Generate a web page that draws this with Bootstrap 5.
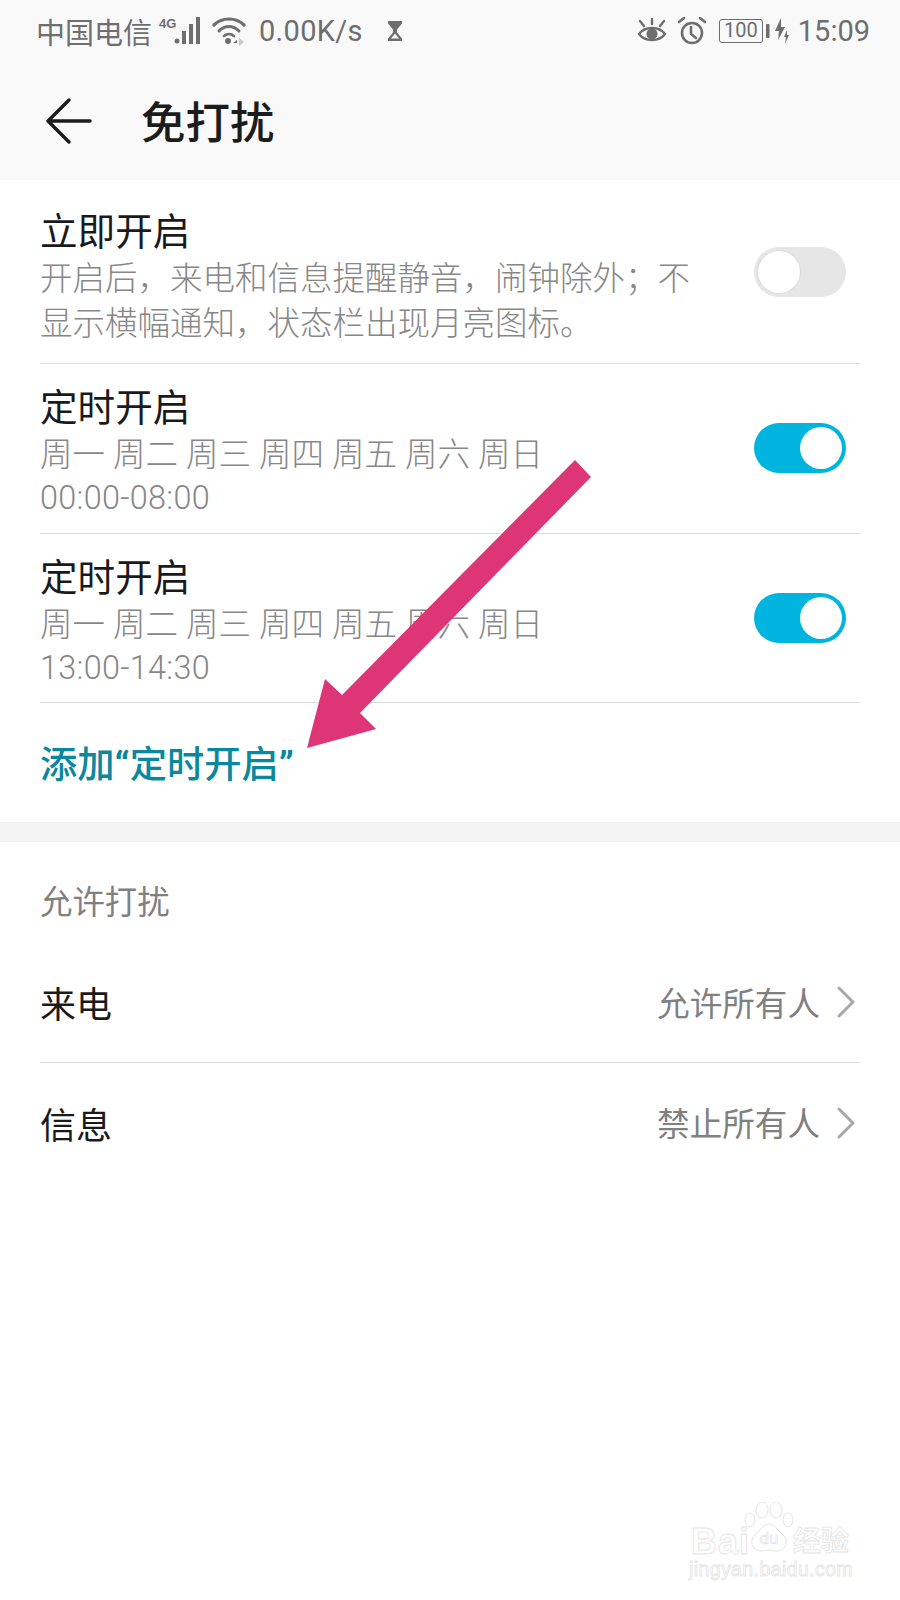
<!DOCTYPE html>
<html lang="zh"><head><meta charset="utf-8">
<link href="https://cdn.jsdelivr.net/npm/bootstrap@5.3.0/dist/css/bootstrap.min.css" rel="stylesheet">
<style>
html,body{margin:0;background:#fff}
body{width:900px;height:1600px;position:relative;overflow:hidden;font-family:"Noto Sans CJK SC","Noto Sans",sans-serif;color:#1a1a1a}
.top-zone{background:#f9f9f9;height:180px}
.stat-bar{height:62px;padding:0 30px 0 36px;color:#6e6e6e}
.carrier{font-size:29px;line-height:1}
.speed,.clock{font-family:Roboto,sans-serif;line-height:1}
.speed{font-size:29px;letter-spacing:.3px;margin-left:13px}
.clock{font-size:29px;margin-left:8px}
.sig-ico{margin-left:2px}
.wifi-ico{margin-left:8px}
.glass-ico{margin-left:24px}
.alarm-ico{margin-left:11px}
.batt{display:block;width:44px;height:24px;margin-left:13px;border:1.5px solid #6e6e6e;border-radius:3px;font-family:Roboto,sans-serif;font-size:20px;line-height:21px;text-align:center;color:#6e6e6e}
.bolt-ico{margin-left:3px}
.nav-zone{height:118px;padding-left:46px}
.nav-title{font-size:44.5px;font-weight:500;margin-left:49px;line-height:1;padding-bottom:2px;color:#1c1c1c}
.setting{margin:0 40px;border-bottom:1px solid #dcdcdc}
.r-first{height:184px;padding-top:26px}
.r-time{height:169.5px;padding-top:18px}
.r-end{border-bottom:0;height:119px;font-size:37.3px;font-weight:500;color:#0b879e;line-height:1;padding-top:3px}
.qt{font-family:Roboto,sans-serif;font-weight:700}
.set-title{font-size:37.6px;line-height:45px;margin-bottom:2px}
.set-sub{font-size:32.5px;line-height:45px;color:#878787;font-weight:300;word-spacing:.8px}
.set-time{font-family:Roboto,sans-serif;font-size:32.4px;letter-spacing:.3px;margin-top:2px}
.copy-col{width:670px}
.sw{width:92px;height:50px;border-radius:25px;margin-right:14px;flex:none;padding:4px}
.sw-off{background:#e6e6e6;margin-top:41px}
.sw-on{background:#00b4e0;margin-top:41px}
.sw i{display:block;width:42px;height:42px;border-radius:50%;background:#fff}
.sw-off i{box-shadow:0 0 0 1px #dcdcdc}
.sw-on i{margin-left:auto}
.band{height:20px;background:#f3f3f3}
.sec-label{font-size:32.4px;color:#808080;margin:0 40px;height:120px;padding-top:37px;line-height:42px}
.link-row{margin:0 40px;font-size:36px;line-height:1}
.row-a{height:101px;border-bottom:1px solid #dedede;padding-bottom:20px}
.row-b{height:119px}
.link-val{font-size:32.6px;color:#808080;margin-right:8px}
.over-arrow{position:absolute;left:0;top:0;pointer-events:none}
.wm{position:absolute;left:688px;top:1500px;width:170px;height:90px;color:transparent;-webkit-text-stroke:.8px #e4e4e4;font-family:"Liberation Sans",sans-serif}
.wm-bai{position:absolute;left:3px;top:24px;font-size:36px;font-weight:700;line-height:1;letter-spacing:1px}
.wm-cn{position:absolute;left:105px;top:25px;font-size:28px;font-weight:700;line-height:1;font-family:"Noto Sans CJK SC",sans-serif}
.wm-url{position:absolute;left:1px;top:60px;font-size:19.5px;line-height:1;letter-spacing:.4px}
.wm-paw{position:absolute;left:56px;top:2px}
</style></head><body>
<div class="top-zone">
 <div class="stat-bar d-flex align-items-center justify-content-between">
  <div class="d-flex align-items-center">
   <span class="carrier">中国电信</span>
   <svg width="50" height="32" viewBox="0 0 50 32" class="sig-ico"><text x="5" y="13" font-family="Liberation Sans" font-size="13" font-weight="700" fill="#6e6e6e">4G</text><g fill="#6e6e6e"><circle cx="23" cy="26" r="2.5"/><rect x="28" y="16" width="4" height="13"/><rect x="35" y="9" width="4" height="20"/><rect x="42" y="2" width="4" height="27"/></g></svg>
   <svg width="34" height="30" viewBox="0 0 34 30" class="wifi-ico"><g fill="none" stroke="#6e6e6e" stroke-linecap="round"><path d="M2 9C10 1 24 1 32 9" stroke-width="3.2"/><path d="M7 15C13 9 21 9 27 15" stroke-width="3"/><path d="M12 20c3-2.500 7-2.500 10 0" stroke-width="2.600"/></g><circle cx="16" cy="25" r="3" fill="#6e6e6e"/><path d="M25 24l-4 3h4z" fill="#6e6e6e"/><path d="M27 22v8l5-4z" fill="#c8c8c8"/></svg>
   <span class="speed">0.00K/s</span>
   <svg width="16" height="22" viewBox="0 0 16 22" class="glass-ico"><path d="M1 1h14v2.500l-5 6v3l5 6V21H1v-2.500l5-6v-3l-5-6z" fill="#6e6e6e"/><path d="M4 18.500l4-5 4 5z" fill="#f9f9f9"/></svg>
  </div>
  <div class="d-flex align-items-center">
   <svg width="30" height="26" viewBox="0 0 30 26"><g stroke="#6e6e6e" stroke-width="2.400" fill="none" stroke-linecap="round"><path d="M2 16C8 8 22 8 28 16 22 24 8 24 2 16z"/><path d="M3 3l4 5M27 3l-4 5M15 1v5"/></g><circle cx="15" cy="16" r="5.500" fill="#6e6e6e"/></svg>
   <svg width="28" height="28" viewBox="0 0 28 28" class="alarm-ico"><g fill="none" stroke="#6e6e6e" stroke-width="2.600" stroke-linecap="round"><circle cx="14" cy="16" r="10"/><path d="M13 10v7l5 4"/><path d="M1 5l5-4M27 5l-5-4"/></g></svg>
   <span class="batt">100</span>
   <svg width="24" height="30" viewBox="0 0 24 30" class="bolt-ico"><rect x="0" y="8" width="3.500" height="14" rx="1" fill="#6e6e6e"/><path d="M15 2l-6 13h4l-1 9 7-13h-4z" fill="#6e6e6e"/><path d="M21 14l-3 7h2l-1 7 4-9h-2z" fill="#6e6e6e"/></svg>
   <span class="clock">15:09</span>
  </div>
 </div>
 <div class="nav-zone d-flex align-items-center">
  <svg width="46" height="46" viewBox="0 0 46 46"><path d="M44 23H2M23 2L2 23l21 21" fill="none" stroke="#1c1c1c" stroke-width="3.400" stroke-linecap="round" stroke-linejoin="round"/></svg>
  <span class="nav-title">免打扰</span>
 </div>
</div>

<div class="setting r-first d-flex justify-content-between">
 <div class="copy-col"><div class="set-title">立即开启</div><div class="set-sub">开启后，来电和信息提醒静音，闹钟除外；不显示横幅通知，状态栏出现月亮图标。</div></div>
 <div class="sw sw-off"><i></i></div>
</div>
<div class="setting r-time d-flex justify-content-between">
 <div class="copy-col"><div class="set-title">定时开启</div><div class="set-sub">周一 周二 周三 周四 周五 周六 周日</div><div class="set-sub set-time">00:00-08:00</div></div>
 <div class="sw sw-on"><i></i></div>
</div>
<div class="setting r-time d-flex justify-content-between">
 <div class="copy-col"><div class="set-title">定时开启</div><div class="set-sub">周一 周二 周三 周四 周五 周六 周日</div><div class="set-sub set-time">13:00-14:30</div></div>
 <div class="sw sw-on"><i></i></div>
</div>
<div class="setting r-end d-flex align-items-center"><span>添加<span class="qt">“</span>定时开启<span class="qt">”</span></span></div>
<div class="band"></div>
<div class="sec-label">允许打扰</div>
<div class="link-row row-a d-flex align-items-center justify-content-between"><span>来电</span><span class="d-flex align-items-center"><span class="link-val">允许所有人</span><svg width="20" height="34" viewBox="0 0 20 34" class="ms-2 me-1"><path d="M3 3l14 14L3 31" fill="none" stroke="#a8a8a8" stroke-width="3" stroke-linecap="round" stroke-linejoin="round"/></svg></span></div>
<div class="link-row row-b d-flex align-items-center justify-content-between"><span>信息</span><span class="d-flex align-items-center"><span class="link-val">禁止所有人</span><svg width="20" height="34" viewBox="0 0 20 34" class="ms-2 me-1"><path d="M3 3l14 14L3 31" fill="none" stroke="#a8a8a8" stroke-width="3" stroke-linecap="round" stroke-linejoin="round"/></svg></span></div>

<svg class="over-arrow" width="900" height="800" viewBox="0 0 900 800"><polygon points="575,460 591,477 360,713 376,729 307,748 325,679 342,695" fill="#dd3576"/></svg>

<div class="wm">
 <span class="wm-bai">Bai</span>
 <svg width="50" height="56" viewBox="0 0 50 56" class="wm-paw"><g fill="#fff" stroke="#e4e4e4" stroke-width="1"><ellipse cx="6" cy="18" rx="5" ry="7"/><ellipse cx="18" cy="8" rx="6" ry="8"/><ellipse cx="32" cy="8" rx="6" ry="8"/><ellipse cx="44" cy="18" rx="5" ry="7"/><path d="M25 22c6 0 9 7 14 11 7 6 2 17-7 16-4-1-10-1-14 0-9 1-14-10-7-16 5-4 8-11 14-11z"/></g><text x="25" y="42" text-anchor="middle" font-family="Liberation Sans" font-size="17" fill="none" stroke="#e4e4e4" stroke-width=".7">du</text></svg>
 <span class="wm-cn">经验</span>
 <span class="wm-url">jingyan.baidu.com</span>
</div>
</body></html>
